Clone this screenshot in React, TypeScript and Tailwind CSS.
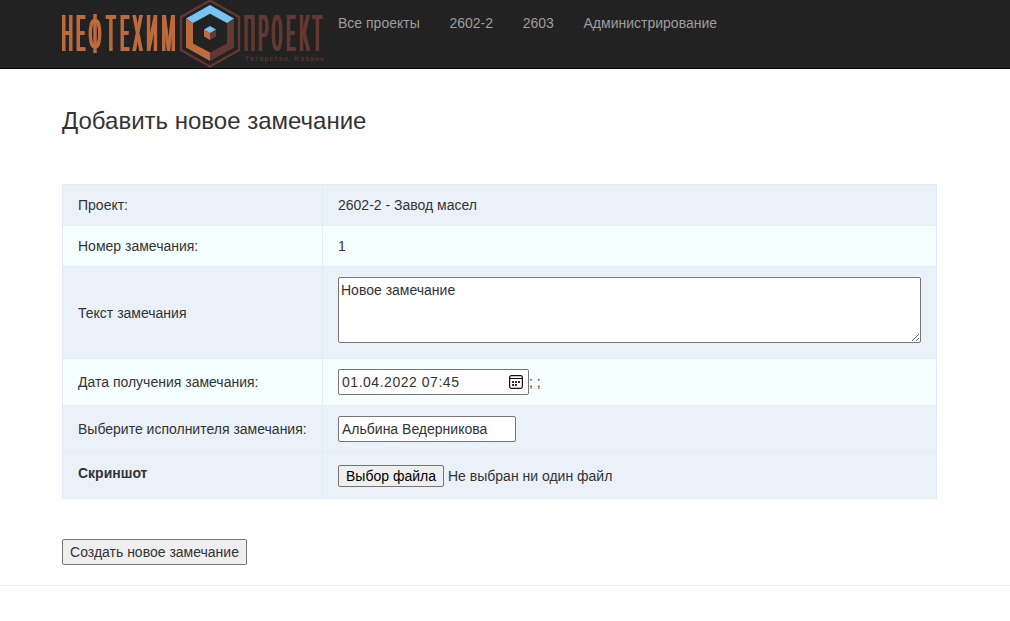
import type { ReactNode } from 'react';

const hex = (cx: number, cy: number, rx: number, ry: number) =>
  `${cx},${cy - ry} ${cx + rx},${cy - ry / 2} ${cx + rx},${cy + ry / 2} ${cx},${cy + ry} ${cx - rx},${cy + ry / 2} ${cx - rx},${cy - ry / 2}`;

const SX = 0.31;
const spread = (centers: number[]) => centers.map((c) => (c / SX).toFixed(2)).join(' ');

function Logo() {
  return (
    <svg width="262" height="68" viewBox="62 0 262 68" className="block shrink-0 overflow-visible" aria-label="Нефтехим Проект">
      <g className="[filter:drop-shadow(1px_0_0_#bd6a3e)_drop-shadow(-1px_0_0_#bd6a3e)]">
        <g
          transform={`scale(${SX} 1)`}
          fontFamily="Roboto, sans-serif"
          fontWeight="400"
          fontSize="50"
          textAnchor="middle"
        >
          <text x={spread([67.3, 80.6, 95.1, 111, 124.6, 137.6, 152, 168.5])} y="51" fill="#bd6a3e">
            НЕФТЕХИМ
          </text>
        </g>
      </g>
      <g className="[filter:drop-shadow(1px_0_0_#633832)_drop-shadow(-1px_0_0_#633832)]">
        <g
          transform={`scale(${SX} 1)`}
          fontFamily="Roboto, sans-serif"
          fontWeight="400"
          fontSize="50"
          textAnchor="middle"
        >
          <text x={spread([249.5, 263.5, 277, 291, 304.5, 317.3])} y="51" fill="#633832">
            ПРОЕКТ
          </text>
        </g>
      </g>
      <text x="245" y="61" fontFamily="Roboto, sans-serif" fontSize="7" fill="#633832" textLength="79" lengthAdjust="spacing">
        Татарстан, Казань
      </text>
      <polygon points={hex(210, 33.5, 29, 33)} fill="#222" stroke="#633832" strokeWidth="2.3" />
      <polygon points="186,19 193,23 193,43.5 210,52.5 210,61 186,47.5" fill="#bd6a3e" />
      <polygon points="234,19 227,23 227,43.5 210,52.5 210,61 234,47.5" fill="#633832" />
      <polygon points="210,5 234,18.5 227,23 210,13.7 193,23 186,18.5" fill="#75c5f0" />
      <polygon points="204,29.5 210,33 210,40 204,36.5" fill="#bd6a3e" />
      <polygon points="216,29.5 210,33 210,40 216,36.5" fill="#633832" />
      <polygon points="210,26 216,29.5 210,33 204,29.5" fill="#75c5f0" />
    </svg>
  );
}

function CalendarIcon() {
  return (
    <svg width="14" height="14" viewBox="0 0 14 14" className="block">
      <rect x="0.6" y="0.6" width="12.8" height="12.8" rx="1.8" fill="none" stroke="#111" strokeWidth="1.2" />
      <path d="M0.5 3.5H13.5" stroke="#111" />
      <path d="M3 6h2v2H3zM6 6h2v2H6zM9 6h2v2H9zM3 9h2v2H3zM6 9h2v2H6z" fill="#333" />
    </svg>
  );
}

function Row({ label, tint, height, children }: { label: ReactNode; tint: string; height: string; children: ReactNode }) {
  return (
    <tr className={`${tint} ${height}`}>
      <td className="border border-[#e0edf8] p-0 pl-[15px] align-middle">{label}</td>
      <td className="border border-[#e0edf8] p-0 px-[15px] align-middle">{children}</td>
    </tr>
  );
}

const BLUE = 'bg-[#eaf1f8]';
const AZURE = 'bg-[#f5ffff]';

export default function App() {
  return (
    <div className="min-h-[621px] bg-white font-['Liberation_Sans',Arial,sans-serif] text-[14px] leading-5 text-[#333]">
      <header className="flex h-[69px] items-start border-b border-[#080808] bg-[#222] pl-[62px]">
        <Logo />
        <nav className="flex gap-[29.7px] pt-[13px] pl-[14px] text-[#9d9d9d]">
          <a>Все проекты</a>
          <a>2602-2</a>
          <a>2603</a>
          <a>Администрирование</a>
        </nav>
      </header>

      <main className="pl-[62px]">
        <h1 className="pt-[39px] text-[24px] leading-[26px]">Добавить новое замечание</h1>

        <table className="mt-[50px] w-[875px] table-fixed border-collapse">
          <colgroup>
            <col className="w-[260px]" />
            <col />
          </colgroup>
          <tbody>
            <Row label="Проект:" tint={BLUE} height="h-[41px]">2602-2 - Завод масел</Row>
            <Row label="Номер замечания:" tint={AZURE} height="h-[41px]">1</Row>
            <Row label="Текст замечания" tint={BLUE} height="h-[92px]">
              <textarea
                className="mb-[6px] block h-[66px] w-[583px] resize rounded-[2px] border border-[#767676] bg-white px-[2px] py-[2px]"
                defaultValue="Новое замечание"
              />
            </Row>
            <Row label="Дата получения замечания:" tint={AZURE} height="h-[47px]">
              <div className="flex items-center">
                <div className="flex h-[26px] w-[191px] items-center justify-between rounded-[2px] border border-[#767676] bg-white pr-[5px] pl-[3px]">
                  <span className="tracking-[0.53px]">01.04.2022 07:45</span>
                  <CalendarIcon />
                </div>
                <span>; ;</span>
              </div>
            </Row>
            <Row label="Выберите исполнителя замечания:" tint={BLUE} height="h-[47px]">
              <input
                className="block h-[26px] w-[178px] rounded-[2px] border border-[#767676] bg-white px-[3px]"
                defaultValue="Альбина Ведерникова"
              />
            </Row>
            <Row label={<b className="block pb-[6px]">Скриншот</b>} tint={BLUE} height="h-[46px]">
              <div className="flex items-center gap-1">
                <button className="h-[22px] w-[106px] rounded-[2px] border border-[#767676] bg-[#efefef] leading-5 whitespace-nowrap text-black">
                  Выбор файла
                </button>
                <span>Не выбран ни один файл</span>
              </div>
            </Row>
          </tbody>
        </table>

        <button className="mt-10 block h-[26px] w-[185px] rounded-[2px] border border-[#767676] bg-[#efefef] whitespace-nowrap">
          Создать новое замечание
        </button>
      </main>

      <hr className="mt-5 border-t border-[#eee]" />
    </div>
  );
}
